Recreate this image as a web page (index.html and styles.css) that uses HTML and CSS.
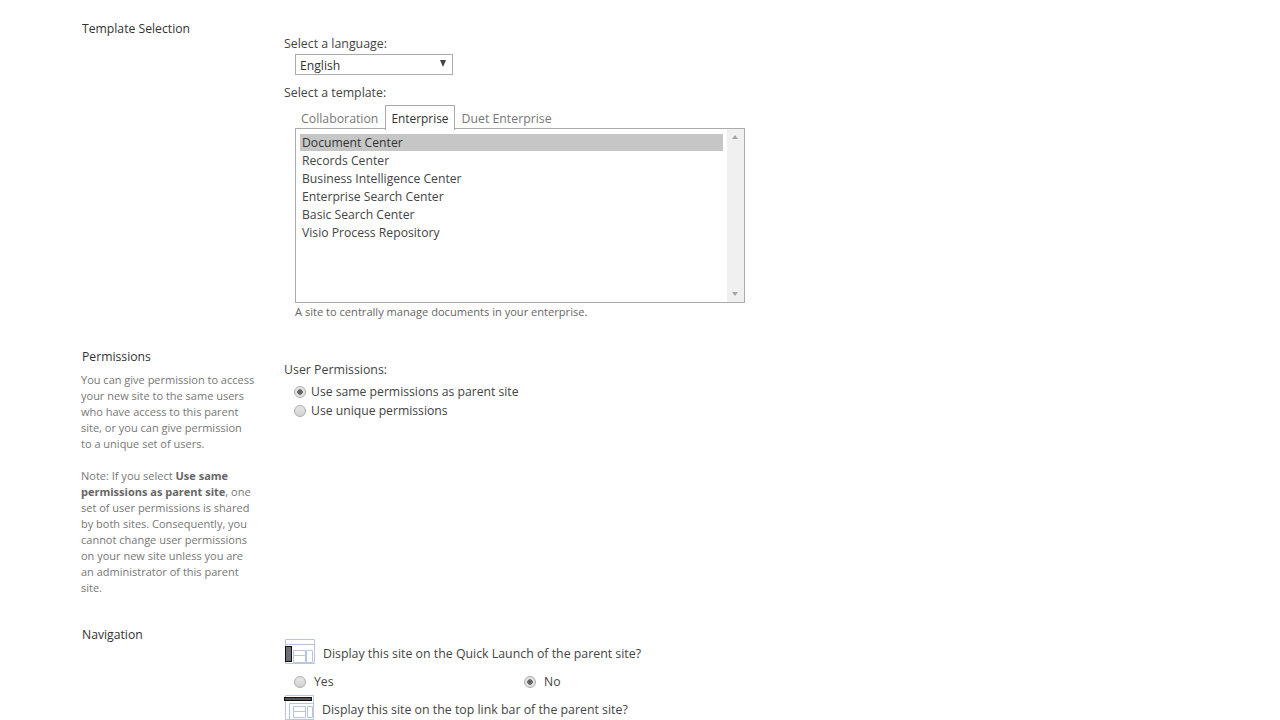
FILE: index.html
```html
<!DOCTYPE html>
<html lang="en">
<head>
    <meta charset="UTF-8">
    <meta name="viewport" content="width=device-width, initial-scale=1.0">
    <title>New SharePoint Site</title>
    <link rel="stylesheet" href="styles.css">
</head>
<body>
    <!-- Template Selection -->
    <div class="section section-template">
        <div class="section-info">
            <h2>Template Selection</h2>
        </div>
        <div class="section-body">
            <div class="field-label">Select a language:</div>
            <div class="dropdown">
                <span>English</span>
                <span class="dropdown-arrow"></span>
            </div>
            <div class="field-label template-label">Select a template:</div>
            <div class="tabs">
                <span class="tab">Collaboration</span>
                <span class="tab tab-active">Enterprise</span>
                <span class="tab">Duet Enterprise</span>
            </div>
            <div class="listbox">
                <ul class="listbox-items">
                    <li class="selected">Document Center</li>
                    <li>Records Center</li>
                    <li>Business Intelligence Center</li>
                    <li>Enterprise Search Center</li>
                    <li>Basic Search Center</li>
                    <li>Visio Process Repository</li>
                </ul>
                <div class="scrollbar">
                    <span class="arrow-up"></span>
                    <span class="arrow-down"></span>
                </div>
            </div>
            <div class="hint">A site to centrally manage documents in your enterprise.</div>
        </div>
    </div>

    <!-- Permissions -->
    <div class="section section-permissions">
        <div class="section-info">
            <h2>Permissions</h2>
            <p>You can give permission to access your new site to the same users who have access to this parent site, or you can give permission to a unique set of users.</p>
            <p>Note: If you select <b>Use same permissions as parent site</b>, one set of user permissions is shared by both sites. Consequently, you cannot change user permissions on your new site unless you are an administrator of this parent site.</p>
        </div>
        <div class="section-body">
            <div class="field-label">User Permissions:</div>
            <label class="radio-row"><input type="radio" name="perm" checked>Use same permissions as parent site</label>
            <label class="radio-row"><input type="radio" name="perm">Use unique permissions</label>
        </div>
    </div>

    <!-- Navigation -->
    <div class="section section-navigation">
        <div class="section-info">
            <h2>Navigation</h2>
        </div>
        <div class="section-body">
            <div class="nav-question">
                <svg class="nav-icon" width="31" height="25" viewBox="0 0 31 25">
                    <path d="M1.5 .5H30.5V24.5H1.5ZM1.5 5.5H30.5M9.5 11.5H21.5V23.5H9.5ZM9.5 16.5H21.5M22.5 11.5H28.5V23.5H22.5Z" fill="#fff" stroke="#b9c4de"/>
                    <rect x="1.5" y="7.5" width="6" height="15" fill="#6d6f75" stroke="#111"/>
                </svg>
                <span>Display this site on the Quick Launch of the parent site?</span>
            </div>
            <div class="yes-no">
                <label class="radio-row"><input type="radio" name="quick">Yes</label>
                <label class="radio-row"><input type="radio" name="quick" checked>No</label>
            </div>
            <div class="nav-question nav-question-top">
                <svg class="nav-icon" width="31" height="25" viewBox="0 0 31 25">
                    <path d="M1.5 .5H29.5V24.5H1.5ZM5.5 8.5V24.5M5.5 8.5H29.5M9.5 11.5H21.5V22.5H9.5ZM9.5 16.5H21.5M23.5 11.5H28.5V22.5H23.5Z" fill="#fff" stroke="#b9c4de"/>
                    <rect x=".5" y="2.5" width="27" height="3" fill="#555" stroke="#111"/>
                </svg>
                <span>Display this site on the top link bar of the parent site?</span>
            </div>
        </div>
    </div>
</body>
</html>
```

FILE: styles.css
```css
html, body {
    height: 720px;
    overflow: hidden;
}
body {
    margin: 0;
    padding: 0 0 0 82px;
    background: #fff;
    color: #444;
    font-family: "Open Sans", "Noto Sans", sans-serif;
    font-size: 12.2px;
    line-height: 18px;
}
.section {
    display: grid;
    grid-template-columns: 202px 1fr;
}
.section-template {
    padding-top: 20px;
    height: 328px;
}
.section-permissions {
    height: 278px;
}
.section-info h2 {
    margin: 0;
    font-size: 12.2px;
    font-weight: 400;
    line-height: 18px;
    color: #333;
}
.section-info p {
    width: 174px;
    margin: 6px 0 16px -1px;
    font-size: 11px;
    line-height: 16px;
    color: #777;
}
.section-info b {
    font-weight: 700;
    color: #666;
}
.section-template .section-body {
    padding-top: 16px;
}
.section-permissions .section-body {
    padding-top: 14px;
}
.field-label {
    font-size: 12.35px;
    line-height: 16px;
}
.dropdown {
    display: flex;
    justify-content: space-between;
    align-items: center;
    box-sizing: border-box;
    width: 158px;
    height: 21px;
    margin: 2px 0 0 11px;
    padding: 2px 6px 0 4px;
    border: 1px solid #ababab;
    color: #333;
}
.dropdown-arrow {
    width: 0;
    height: 0;
    margin-bottom: 5px;
    border-left: 3.5px solid transparent;
    border-right: 3.5px solid transparent;
    border-top: 7px solid #444;
}
.template-label {
    margin-top: 10px;
}
.tabs {
    display: flex;
    margin: 4px 0 -1px 11px;
    height: 24px;
    position: relative;
    font-size: 12.3px;
}
.tab {
    padding: 5px 6px 0;
    margin-right: 1px;
    color: #777;
}
.tab-active {
    background: #fff;
    border: 1px solid #ababab;
    border-bottom: none;
    padding: 3px 5px 0;
    height: 21px;
    font-size: 11.9px;
    color: #333;
    position: relative;
    z-index: 1;
}
.listbox {
    display: flex;
    box-sizing: border-box;
    width: 450px;
    height: 175px;
    margin-left: 11px;
    border: 1px solid #ababab;
}
.listbox-items {
    flex: 1;
    margin: 0;
    padding: 5px 4px;
    list-style: none;
    color: #444;
}
.listbox-items li {
    height: 18px;
    padding-left: 2px;
}
.listbox-items li.selected {
    height: 17px;
    margin-bottom: 1px;
    background: #c6c6c6;
    color: #333;
}
.scrollbar {
    display: flex;
    flex-direction: column;
    justify-content: space-between;
    align-items: center;
    width: 17px;
    padding: 6px 1px 6px 0;
    box-sizing: border-box;
    background: #f0f0f0;
}
.arrow-up, .arrow-down {
    width: 0;
    height: 0;
    border-left: 3.5px solid transparent;
    border-right: 3.5px solid transparent;
}
.arrow-up {
    border-bottom: 4px solid #a6a6a6;
}
.arrow-down {
    border-top: 4px solid #a6a6a6;
}
.hint {
    margin: 1px 0 0 11px;
    font-size: 11.1px;
    line-height: 16px;
    color: #666;
}
.radio-row {
    display: flex;
    align-items: center;
    height: 19px;
    color: #444;
}
.radio-row input {
    appearance: none;
    box-sizing: border-box;
    width: 12px;
    height: 12px;
    margin: 0 5px 0 10px;
    border: 1px solid #adadad;
    border-radius: 50%;
    background: linear-gradient(#e6e6e6, #d2d2d2);
}
.radio-row input:checked {
    background: radial-gradient(circle, #666 0 2.5px, #e2e2e2 3px);
}
.section-permissions .field-label {
    margin-bottom: 4px;
}
.section-navigation .section-body {
    padding-top: 13px;
}
.nav-question {
    display: flex;
    height: 25px;
    gap: 8px;
    font-size: 12.35px;
    line-height: 29px;
}
.nav-question-top {
    gap: 7px;
}
.nav-icon {
    flex: none;
}
.yes-no {
    display: grid;
    grid-template-columns: 230px 120px;
    margin: 8px 0 4px;
}
.yes-no .radio-row input {
    margin: 0 8px 0 10px;
}
```
